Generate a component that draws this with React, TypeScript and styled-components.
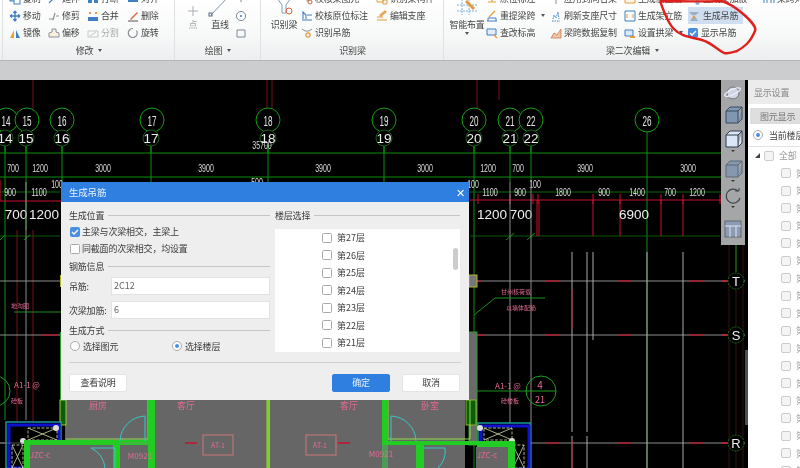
import React from 'react';
import styled, { createGlobalStyle } from 'styled-components';

const Global = createGlobalStyle`
  html, body { margin: 0; padding: 0; background: #000; overflow: hidden; }
  * { box-sizing: border-box; }
`;

const Page = styled.div`
  position: relative; width: 800px; height: 468px; overflow: hidden;
  font-family: "Noto Sans CJK SC", "Noto Sans", sans-serif; font-size: 9px; letter-spacing: -0.2px; color: #333;
  filter: blur(0.35px);
`;
const Ribbon = styled.div`
  display: flex; height: 61px; overflow: hidden; padding-left: 2px;
  background: linear-gradient(#fff, #f7f8f8 60%, #eceeef);
  border-bottom: 1px solid #b4b6b7;
`;
const Group = styled.div<{ $w: number }>`
  flex: none; width: ${p => p.$w}px; display: flex; flex-direction: column;
  border-left: 1px solid #dfe1e2; padding-left: 1px;
`;
const GroupBody = styled.div<{ $pl: number }>`
  height: 42px; display: flex; padding-left: ${p => p.$pl}px;
`;
const GroupLabel = styled.div`
  height: 17px; display: flex; align-items: center; justify-content: center; gap: 5px; color: #444;
`;
const Caret = styled.span`
  display: inline-block; width: 0; height: 0; border-left: 2.5px solid transparent; border-right: 2.5px solid transparent; border-top: 3px solid #555;
`;
const RowCaret = styled(Caret)`
  margin-left: 4px;
`;
const Col = styled.div<{ $w: number }>`
  flex: none; width: ${p => p.$w}px; margin-top: -10px; display: flex; flex-direction: column;
`;
const ToolRow = styled.div<{ $muted?: boolean; $active?: boolean; $gap?: number }>`
  height: 17px; display: flex; align-items: center; gap: ${p => p.$gap ?? 2}px; white-space: nowrap;
  color: ${p => (p.$muted ? '#aaa' : '#444')};
  background: ${p => (p.$active ? 'linear-gradient(90deg,#cfdef0 0 55px,transparent 55px)' : 'none')};
  & > svg { flex: none; }
`;
const BigTool = styled.div<{ $w: number; $muted?: boolean }>`
  flex: none; width: ${p => p.$w}px; margin-top: -10px; display: flex; flex-direction: column; align-items: center;
  color: ${p => (p.$muted ? '#aaa' : '#444')}; white-space: nowrap;
`;
const BigIconBox = styled.div`
  height: 27px; display: flex; align-items: flex-end; justify-content: center;
`;
const BigLabel = styled.div`
  height: 15px; line-height: 15px;
`;
const Band = styled.div`
  height: 19px; background: #cbcdcf;
`;
const Main = styled.div`
  display: flex; height: 388px; background: #000;
`;
const Canvas = styled.div`
  position: relative; flex: none; width: 745px; height: 388px; overflow: hidden; background: #000;
`;
const Drawing = styled.svg`
  display: block; width: 745px; height: 388px;
`;
const Scribble = styled.svg`
  position: absolute; left: 640px; top: 0; width: 130px; height: 62px; pointer-events: none;
`;
const Splitter = styled.div`
  position: relative; flex: none; width: 3px; background: #000;
  &::after { content: ""; position: absolute; left: 0; top: 270px; width: 3px; height: 75px; background: #4d4f55; }
`;
const Panel = styled.div`
  flex: 1; min-width: 0; background: #fff; overflow: hidden; white-space: nowrap; display: flex; flex-direction: column; color: #666;
`;
const PanelTitle = styled.div`
  height: 24px; flex: none; display: flex; align-items: center; padding-left: 6px; background: #ececec; color: #888;
`;
const PanelTab = styled.div`
  flex: none; height: 16px; margin: 4px 0 0 2px; display: flex; align-items: center; padding-left: 10px; background: #dedede; color: #777;
`;
const ScopeRow = styled.div`
  flex: none; height: 23px; display: flex; align-items: center; gap: 6px; padding-left: 5px; border-bottom: 1px solid #e2e2e2; color: #444;
`;
const TreeRow = styled.div<{ $child?: boolean }>`
  flex: none; height: 17.5px; display: flex; align-items: center; gap: 5px; padding-left: ${p => (p.$child ? 33 : 7)}px; color: #999;
`;
const Twist = styled.span`
  width: 0; height: 0; border-bottom: 5px solid #444; border-left: 5px solid transparent; margin-right: -1px;
`;
const TreeBox = styled.span`
  width: 10px; height: 10px; flex: none; border: 1px solid #ccc; border-radius: 2px; background: #f4f4f4;
`;
const Bar = styled.div`
  position: absolute; left: 721px; top: 0; width: 24px; height: 165px; background: #a5a6a7; display: flex; flex-direction: column; align-items: center; padding-top: 4px;
`;
const BarCaret = styled.span`
  width: 0; height: 0; margin: 1px 0 2px; border-left: 2px solid transparent; border-right: 2px solid transparent; border-top: 2px solid #333;
`;

const Dialog = styled.div`
  position: absolute; left: 61px; top: 102px; width: 408px; height: 218px; background: #eeeeee; display: flex; flex-direction: column; color: #3a3a3a;
`;
const DialogHead = styled.div`
  flex: none; height: 20px; background: #2e7fe0; color: #e8f1fc; display: flex; align-items: center; justify-content: space-between; padding: 0 4px 0 8px; font-size: 9.5px;
`;
const Close = styled.span`
  font-size: 11px; line-height: 1; color: #fff;
`;
const DialogBody = styled.div`
  flex: none; height: 160px; display: grid; grid-template-columns: 201px 185px; column-gap: 5px; padding: 6px 0 0 8px;
`;
const Pane = styled.div`
  display: flex; flex-direction: column;
`;
const Legend = styled.div<{ $mt?: number }>`
  flex: none; height: 14px; margin-top: ${p => p.$mt ?? 0}px; display: flex; align-items: center; gap: 4px; white-space: nowrap;
  &::after { content: ""; flex: 1; height: 1px; background: #c6c6c6; }
`;
const Check = styled.span<{ $on?: boolean }>`
  flex: none; width: 10px; height: 10px; border-radius: 1.5px; display: inline-flex; align-items: center; justify-content: center;
  border: 1px solid ${p => (p.$on ? '#4a90e2' : '#aaa')}; background: ${p => (p.$on ? '#4a90e2' : '#fff')};
`;
const Options = styled.div`
  flex: none; margin-top: 1px;
`;
const Option = styled.label`
  height: 17px; display: flex; align-items: center; gap: 2px; padding-left: 1px; white-space: nowrap;
`;
const FieldRow = styled.div<{ $mt?: number }>`
  flex: none; height: 18px; margin-top: ${p => p.$mt ?? 0}px; display: flex; align-items: center; white-space: nowrap;
`;
const FieldName = styled.span`
  flex: none; width: 42px;
`;
const Input = styled.div`
  flex: 1; height: 18px; background: #fff; border: 1px solid #e2e2e2; padding-left: 2px; line-height: 16px; color: #666; letter-spacing: 0;
`;
const RadioRow = styled.div`
  flex: none; height: 18px; display: grid; grid-template-columns: 102px 1fr; align-items: center;
`;
const RadioItem = styled.span`
  display: flex; align-items: center; gap: 3px; padding-left: 1px;
`;
const Radio = styled.span<{ $on?: boolean }>`
  flex: none; width: 10px; height: 10px; border-radius: 50%; border: 1px solid #aaa; background: #fff; display: inline-flex; align-items: center; justify-content: center;
  &::after { content: ""; width: 4px; height: 4px; border-radius: 50%; background: ${p => (p.$on ? '#4a90e2' : 'transparent')}; }
`;
const FloorList = styled.div`
  position: relative; flex: none; height: 123px; margin-top: 7px; background: #fff; padding: 0 0 0 47px; overflow: hidden;
`;
const FloorItem = styled.div`
  height: 17.5px; display: flex; align-items: center; gap: 5px; letter-spacing: 0; white-space: nowrap;
`;
const ScrollThumb = styled.div`
  position: absolute; right: 2px; top: 19px; width: 5px; height: 22px; border-radius: 3px; background: #ccc;
`;
const DialogFoot = styled.div`
  flex: none; margin: 0 8px 0 8px; height: 38px; border-top: 1px solid #cfcfcf; display: flex; align-items: center; padding-top: 2px;
`;
const Btn = styled.div<{ $primary?: boolean; $ml?: number }>`
  width: 58px; height: 18px; display: flex; align-items: center; justify-content: center; border-radius: 2px; margin-left: ${p => p.$ml ?? 0}px;
  background: ${p => (p.$primary ? '#2e7fe0' : '#fff')}; color: ${p => (p.$primary ? '#e8f1fc' : '#3a3a3a')}; border: 1px solid ${p => (p.$primary ? '#2e7fe0' : '#e4e4e4')};
`;

const Lbl = styled.text<{ $c?: string; $s?: number }>`
  font-family: "Liberation Sans", sans-serif; letter-spacing: 0; fill: ${p => p.$c ?? '#ddd'}; font-size: ${p => p.$s ?? 10}px; text-anchor: middle;
`;
const Pink = styled.text<{ $s?: number }>`
  font-family: "Noto Sans CJK SC", sans-serif; letter-spacing: 0; fill: #e26a94; font-size: ${p => p.$s ?? 6}px; text-anchor: middle;
`;

const S = ({ children, w = 12 }: { children: React.ReactNode; w?: number }) => (
  <svg width={w} height={12} viewBox="0 0 12 12" fill="none">{children}</svg>
);
const B = '#3f7fc6', O = '#e79a3b', G = '#8a8f96', R = '#d8643c', LB = '#a9cdf0';
const icons: Record<string, React.ReactNode> = {
  copy: <><rect x="1" y="1" width="6" height="7" fill={LB} stroke={B} /><rect x="5" y="4" width="6" height="7" fill="#fff" stroke={B} /></>,
  move: <path d="M6 1v10M1 6h10M6 1 4.5 3M6 1l1.5 2M6 11 4.5 9M6 11l1.5-2M1 6l2-1.5M1 6l2 1.5M11 6 9 4.5M11 6 9 7.5" stroke={B} strokeWidth="1.3" />,
  mirror: <><path d="M1 11 5 3v8z" fill="#e8a23a" /><path d="M7 3l4 8H7z" fill={B} /></>,
  extend: <path d="M1 10 6 5M6 5l5-4M9 1h2v2" stroke={B} strokeWidth="1.2" />,
  trim: <path d="M1 9h4M7 3 5 10M8 6h3" stroke={G} strokeWidth="1.2" />,
  offset: <path d="M1 10V6l3-1V2h4v3l3 1v4z" fill="#f8efdc" stroke={G} />,
  brk: <path d="M1 2h4v8H1zM7 2h4v8H7z" fill={B} />,
  merge: <><path d="M1 7h10v4H1z" fill={B} /><path d="M2 2h2v2H2zM8 2h2v2H8z" fill={O} /></>,
  split: <path d="M1 10V4h10v6zM3 9l6-4" stroke="#c5c7c9" />,
  align: <path d="M1 1h10v8H1z" fill={B} />,
  del: <><path d="M3 9 10 2l1 1-7 7z" fill={R} /><path d="M1 11h10" stroke="#555" /></>,
  rotate: <path d="M9.5 3.5A4.5 4.5 0 1 1 6 1.5" stroke={G} strokeWidth="1.2" />,
  pt: <path d="M6 1v10M1 6h10" stroke="#aab0b6" />,
  circle: <><circle cx="6" cy="6" r="4.6" stroke="#7d8b98" /><circle cx="6" cy="6" r="1" fill={B} /></>,
  rect: <path d="M2 3h8v7H2z" stroke="#7d8b98" />,
  arcdot: <path d="M6 1v8" stroke="#7d8b98" />,
  check1: <><path d="M3 1h7l-2 4v3H6V5z" fill="#eef3f8" stroke={G} /><circle cx="9" cy="9" r="2" stroke={R} /></>,
  mark: <path d="M1 10h10M2 9V2l3 3v4M6 5h5" stroke={B} strokeWidth="1.1" />,
  hang: <><path d="M1 2l3 2h4l3-2" stroke={G} /><circle cx="7" cy="8" r="2.2" stroke={O} strokeWidth="1.2" /></>,
  member: <path d="M1 1h6v8H1zM7 7h4v4H7z" stroke={O} />,
  edit: <path d="M1 10h10M1 7h6M4 5l5-4 1 1-5 4z" stroke={O} strokeWidth="1.1" />,
  orig: <path d="M2 9h8M6 1v8" stroke={O} strokeWidth="1.2" />,
  reget: <><path d="M1 11h10M2 11V8h8v3" stroke={B} /><path d="M3 7 9 1" stroke={O} strokeWidth="1.3" /></>,
  change: <><path d="M1 2h9v6H1z" fill="#e4eefa" stroke={B} /><path d="M8 8l3 3" stroke={O} strokeWidth="1.3" /></>,
  apply: <><circle cx="6" cy="4" r="3" fill={O} /><path d="M6 7v4" stroke={G} /></>,
  refresh: <path d="M2 11h8M3 9l1-4 2 3 2-6 1 7" stroke={B} strokeDasharray="1.5 1" />,
  spancopy: <path d="M1 11l3-5 3 2 4-6v9z" fill="#e9c9a8" stroke={R} strokeWidth=".7" />,
  side: <path d="M1 2h10v8H1z" fill="#fdf5e6" stroke={O} />,
  stand: <><path d="M1 1h10v10H1z" stroke={B} /><path d="M3 4v4M9 4v4" stroke={O} /></>,
  arch: <><path d="M1 3h8v6H1z" fill="#dceafa" stroke={B} /><path d="M6 9h5v2H6z" fill={O} /></>,
  hanger: <><path d="M1 2h10L8 5H4zM2 11h8L8 8H4z" fill="#9ab0c6" /><path d="M4 8h4l-2-3z" fill={O} /></>,
  haunch: <path d="M1 1h7v4H1zM8 8h3v3H8z" fill={LB} stroke={B} strokeWidth=".7" />,
  span: <path d="M1 10V4h10v6M4 4v6M8 4v6" stroke={B} />,
};

type T = { i: string; t?: string; m?: boolean; a?: boolean; act?: boolean; g?: number; chk?: boolean };
const Tick = () => (
  <svg width="8" height="8" viewBox="0 0 8 8" fill="none"><path d="M1 4l2 2 4-4" stroke="#fff" strokeWidth="1.3" /></svg>
);
const Tool = ({ i, t, m, a, act, g, chk }: T) => (
  <ToolRow $muted={m} $active={act} $gap={g}>
    {chk ? <Check $on><Tick /></Check> : <S>{icons[i]}</S>}
    {t && <span>{t}</span>}
    {a && <RowCaret />}
  </ToolRow>
);
const ToolCol = ({ w, items }: { w: number; items: T[] }) => (
  <Col $w={w}>{items.map((x, n) => <Tool key={n} {...x} />)}</Col>
);
const Big = ({ w, label, muted, children, caret }: { w: number; label: string; muted?: boolean; children: React.ReactNode; caret?: boolean }) => (
  <BigTool $w={w} $muted={muted}>
    <BigIconBox>{children}</BigIconBox>
    <BigLabel>{label}</BigLabel>
    {caret && <Caret />}
  </BigTool>
);

const top = [[14, 6], [15, 27], [16, 62], [17, 152], [18, 268], [19, 384], [20, 474], [21, 510], [22, 531], [26, 647]];
const second = [[14, 5], [15, 26], [16, 62], [17, 151], [18, 268], [19, 384], [20, 474], [21, 510], [22, 531]];
const dims1: [string, number][] = [['700', 13], ['1200', 40], ['3000', 103], ['3900', 206], ['3900', 323], ['3000', 425], ['1200', 488], ['700', 518], ['3900', 585], ['3000', 688]];
const dims2: [string, number][] = [['900', 10], ['1100', 39], ['1100', 490], ['900', 520], ['1800', 563], ['900', 604], ['1400', 637], ['700', 670], ['1200', 697]];
const redTicks = [478, 510, 533, 538, 593, 620, 661, 683, 720];

const Dim = ({ x, y, t, c }: { x: number; y: number; t: string; c?: string }) => (
  <Lbl x={x} y={y} $c={c} textLength={t.length * 3.9} lengthAdjust="spacingAndGlyphs">{t}</Lbl>
);

const Hatch = ({ x, y, w, h }: { x: number; y: number; w: number; h: number }) => (
  <g stroke="#cfe0a8" strokeWidth=".8" fill="none" strokeDasharray="3 1.5">
    <rect x={x} y={y} width={w} height={h} />
    <path d={`M${x} ${y}L${x + w} ${y + h}M${x} ${y + h}L${x + w} ${y}`} strokeDasharray="none" />
  </g>
);

const CadDrawing = () => (
  <Drawing viewBox="0 80 745 388">
    <g stroke="#7a0f1c" strokeWidth="1" fill="none">
      <path d="M33 80V110M267 80V110M272 80V110M477 80V110M499 80V100" />
      <path d="M17 230V430M33 230V430M150 195V200" />
    </g>
    <g stroke="#0c8f0c" fill="none">
      <path d="M0 153H721M0 177H721" />
      <path d="M5 146V230M26 146V230M62 146V182M151 146V182M268 146V182M384 146V182M474 146V182M510 146V182M531 146V182M647 132V182" />
      <path d="M474 182V468M647 182V468M5 230V420" stroke="#158a15" />
    </g>
    <path d="M0 192H60M470 192H721" stroke="#0a6a0a" fill="none" />
    <path d="M470 236H720M0 236H60" stroke="#0a5a0a" fill="none" />
    <path d="M0 201H62M470 200H721" stroke="#c8102e" fill="none" />
    <path d="M0 201V180M537 200V236M539 200V236M593 200V236M620 200V236M661 200V236M683 200V236" stroke="#c8102e" fill="none" />
    {redTicks.map(x => <path key={x} d={`M${x} 194V204`} stroke="#c8102e" />)}
    {top.map(([n, x]) => (
      <g key={n}>
        <circle cx={x} cy={120} r={12} fill="#000" stroke="#12a012" strokeWidth="1" />
        <Lbl x={x} y={126} textLength={9} lengthAdjust="spacingAndGlyphs" $s={15} $c="#e6e6e6">{n}</Lbl>
      </g>
    ))}
    {second.map(([n, x]) => (
      <g key={n}>
        <circle cx={x} cy={138} r={8} fill="#000" stroke="#1c5c1c" />
        <Lbl x={x} y={143} $s={13.5} $c="#eee">{n}</Lbl>
      </g>
    ))}
    <path d="M5 146V153M26 146V153M62 146V153M151 146V153M268 146V153M384 146V153M474 146V153M510 146V153M531 146V153" stroke="#0c8f0c" />
    <Dim x={262} y={149} t="35700" />
    {dims1.map(([t, x]) => <Dim key={x} x={x} y={172} t={t} />)}
    {dims2.map(([t, x]) => <Dim key={x} x={x} y={196} t={t} />)}
    <Dim x={57} y={188} t="100" />
    <Dim x={473} y={188} t="100" />
    <Dim x={535} y={188} t="100" />
    <Dim x={257} y={186} t="500" />
    {[[16, '700'], [44, '1200'], [492, '1200'], [521, '700'], [634, '6900']].map(([x, t]) => (
      <Lbl key={String(x)} x={Number(x)} y={219} $s={13.5} $c="#f0f0f0">{t}</Lbl>
    ))}
    <path d="M0 240 5 235M24 240 30 235M506 240 514 233M527 240 535 233" stroke="#0c8f0c" fill="none" />
    <g stroke="#8c8c8c" fill="none">
      <path d="M26 182V420M510 182V468M531 182V468" />
      <path d="M0 281H745M0 335H745M0 443H745" />
      <path d="M572 252V432M587 252V432M593 252V340M647 252V468M683 252V468M572 436V468M587 436V468" stroke="#aaa" />
    </g>
    <g stroke="#a81c2c" strokeWidth="1.4" fill="none">
      <path d="M545 281h15M618 281h14M690 281h14M545 335h15M618 335h14M690 335h14M545 443h15M618 443h14M690 443h14M42 335h16M475 335h10M475 281h6" />
      <path d="M572 290V330M572 440V468" strokeWidth="1" />
    </g>
    <path d="M722 281h5M722 335h5M722 443h5" stroke="#cc2233" strokeWidth="1.4" />
    <path d="M729 245V468M743 245V468M736 245V468" stroke="#3a1010" />
    <path d="M736 245V272" stroke="#148a14" />
    {[['T', 281], ['S', 335], ['R', 443]].map(([t, y]) => (
      <g key={String(t)}>
        <circle cx={736} cy={Number(y)} r={8} fill="#000" stroke="#1c6e1c" strokeDasharray="2 1" />
        <Lbl x={736} y={Number(y) + 5} $s={13} $c="#eee">{t}</Lbl>
      </g>
    ))}
    <path d="M474 315 495 298H545" stroke="#1f8f1f" fill="none" />
    <path d="M14 312H62" stroke="#1f8f1f" fill="none" />
    <path d="M470 391H526" stroke="#1f8f1f" fill="none" />
    <Pink x={516} y={294}>甘州核荷载</Pink>
    <Pink x={521} y={310}>以墙体配筋</Pink>
    <Pink x={20} y={308}>地沟图</Pink>
    <Pink x={508} y={389} $s={8}>A1-1 @</Pink>
    <Pink x={510} y={403}>砼楼板</Pink>
    <Pink x={27} y={388} $s={8}>A1-1 @</Pink>
    <Pink x={17} y={403}>砼板</Pink>
    <circle cx={541} cy={391} r={15} fill="none" stroke="#1f9f1f" />
    <path d="M526 391H556" stroke="#1f9f1f" />
    <Pink x={540} y={389} $s={10}>4</Pink>
    <Pink x={540} y={403} $s={9}>21</Pink>
    <circle cx={-5} cy={391} r={15} fill="none" stroke="#1f9f1f" />
    <rect x={469} y={275} width={8} height={12} fill="#777" stroke="#b5b52a" />
    <rect x={469} y={332} width={8} height={113} fill="#6a6a6a" stroke="#2f9a2f" />
    <rect x={60} y={275} width={2} height={12} fill="#b5b52a" />
    <rect x={60} y={332} width={2} height={70} fill="#2f9a2f" />
    <rect x={65} y={400} width={400} height={68} fill="#666" />
    <rect x={60} y={400} width={6} height={25} fill="#0b5c0b" stroke="#9ccc3a" />
    <rect x={466} y={400} width={10} height={25} fill="#0b5c0b" stroke="#8fb52a" />
    <path d="M66 439H148V400M267 400V468M388 400V439H470V400" stroke="#8fe04a" fill="none" />
    <rect x={6} y={422} width={55} height={46} fill="#000" stroke="#1aa0a0" strokeWidth="1.4" />
    <rect x={9} y={425} width={50} height={43} fill="#000" stroke="#1010d0" strokeWidth="3" />
    <Hatch x={28} y={428} w={29} h={12} />
    <Hatch x={12} y={445} w={11} h={23} />
    <rect x={30} y={445} width={40} height={23} fill="#666" />
    <circle cx={56} cy={428} r={3} fill="#ddd" />
    <circle cx={23} cy={441} r={3} fill="#ddd" />
    <rect x={478} y={423} width={52} height={46} fill="#000" stroke="#1aa0a0" strokeWidth="1.4" />
    <rect x={481} y={426} width={48} height={43} fill="#000" stroke="#1010d0" strokeWidth="3" />
    <Hatch x={484} y={428} w={28} h={12} />
    <Hatch x={513} y={445} w={11} h={23} />
    <rect x={476} y={447} width={33} height={21} fill="#666" />
    <circle cx={480} cy={428} r={3} fill="#ddd" />
    <circle cx={512} cy={441} r={3} fill="#ddd" />
    <g fill="#22cc22">
      <rect x={24} y={440} width={131} height={5} />
      <rect x={24} y={445} width={6} height={23} />
      <rect x={148} y={400} width={7} height={68} />
      <rect x={113} y={445} width={7} height={23} />
      <rect x={382} y={400} width={6} height={45} />
      <rect x={382} y={445} width={6} height={23} fill="#4f9a55" />
      <rect x={388} y={441} width={92} height={4} />
      <rect x={416} y={445} width={8} height={23} />
      <rect x={477} y={441} width={38} height={6} />
      <rect x={508} y={447} width={7} height={21} />
    </g>
    <rect x={267} y={400} width={3} height={68} fill="#7ed321" />
    <g stroke="#38c8c8" strokeWidth="1" fill="none">
      <path d="M145 416V441M145 416A26 26 0 0 0 120 441" />
      <path d="M91 448H115V468M91 448A24 24 0 0 1 105 468" />
      <path d="M391 416V441M391 416A26 26 0 0 1 416 441" />
      <path d="M445 448H424M445 448A24 24 0 0 1 438 468" />
    </g>
    <rect x={203} y={435} width={30} height={20} fill="none" stroke="#c77" />
    <rect x={306} y={435} width={30} height={20} fill="none" stroke="#c77" />
    <path d="M185 443H197M338 443H350" stroke="#c8102e" strokeWidth="1.4" />
    <path d="M0 443H24M120 443H148" stroke="#888" opacity=".6" />
    <Pink x={218} y={448} $s={7}>AT-1</Pink>
    <Pink x={320} y={448} $s={7}>AT-1</Pink>
    <Pink x={98} y={409} $s={9}>厨房</Pink>
    <Pink x={186} y={409} $s={9}>客厅</Pink>
    <Pink x={349} y={409} $s={9}>客厅</Pink>
    <Pink x={430} y={409} $s={9}>卧室</Pink>
    <Pink x={140} y={459} $s={8}>M0921</Pink>
    <Pink x={381} y={457} $s={8}>M0921</Pink>
    <Pink x={40} y={458} $s={8}>JZC-c</Pink>
    <Pink x={487} y={458} $s={8}>JZC-c</Pink>
  </Drawing>
);

const FloatIcons = () => (
  <>
    <svg width="18" height="18" viewBox="0 0 18 18" fill="none"><circle cx="9" cy="9" r="6" fill="#cfd6e2" stroke="#6f7480" /><ellipse cx="9" cy="8" rx="8.5" ry="2.6" transform="rotate(-25 9 9)" stroke="#eef" strokeWidth="1.2" /></svg>
    <svg width="19" height="20" viewBox="0 0 19 20" style={{ marginTop: 3 }} fill="none"><path d="M2 6h12v12H2zM2 6l4-4h12l-4 4M14 18l4-4V2" fill="#7f97b2" stroke="#3b4a5c" /></svg>
    <svg width="19" height="20" viewBox="0 0 19 20" style={{ marginTop: 4 }} fill="none"><path d="M2 6h12v12H2zM2 6l4-4h12l-4 4M14 18l4-4V2" fill="#dbe7f6" stroke="#2d3c4e" /></svg>
    <BarCaret />
    <svg width="19" height="20" viewBox="0 0 19 20" style={{ marginTop: 5 }} fill="none"><path d="M2 6h12v12H2zM2 6l4-4h12l-4 4M14 18l4-4V2" fill="#8498b0" stroke="#5d6875" /></svg>
    <BarCaret />
    <svg width="19" height="18" viewBox="0 0 19 18" style={{ marginTop: 3 }} fill="none"><path d="M14 4A7 7 0 1 0 16 11" stroke="#404449" strokeWidth="1.2" /><path d="M11 4h4V1" stroke="#404449" /></svg>
    <BarCaret />
    <svg width="18" height="18" viewBox="0 0 18 18" style={{ marginTop: 10 }} fill="none"><rect x="1" y="1" width="16" height="16" fill="#8c9cb4" stroke="#5d6875" /><path d="M1 6h16M6 6v11M12 6v11" stroke="#dfe7f2" /></svg>
  </>
);

const floors = ['第27层', '第26层', '第25层', '第24层', '第23层', '第22层', '第21层'];

export default function App() {
  return (
    <Page>
      <Global />
      <Ribbon>
        <Group $w={172}>
          <GroupBody $pl={5}>
            <ToolCol w={39} items={[{ i: 'copy', t: '复制' }, { i: 'move', t: '移动' }, { i: 'mirror', t: '镜像' }]} />
            <ToolCol w={39} items={[{ i: 'extend', t: '延伸' }, { i: 'trim', t: '修剪' }, { i: 'offset', t: '偏移' }]} />
            <ToolCol w={40} items={[{ i: 'brk', t: '打断' }, { i: 'merge', t: '合并' }, { i: 'split', t: '分割', m: true }]} />
            <ToolCol w={45} items={[{ i: 'align', t: '对齐' }, { i: 'del', t: '删除' }, { i: 'rotate', t: '旋转' }]} />
          </GroupBody>
          <GroupLabel>修改<Caret /></GroupLabel>
        </Group>
        <Group $w={86}>
          <GroupBody $pl={5}>
            <Big w={24} label="点" muted><S w={22}>{icons.pt}</S></Big>
            <Big w={30} label="直线"><svg width="24" height="24" viewBox="0 0 24 24" fill="none"><path d="M3 22 22 2" stroke="#7d95ad" /><rect x="1" y="20" width="3" height="3" stroke="#567" /></svg></Big>
            <ToolCol w={14} items={[{ i: 'arcdot' }, { i: 'circle' }, { i: 'rect' }]} />
          </GroupBody>
          <GroupLabel>绘图<Caret /></GroupLabel>
        </Group>
        <Group $w={183}>
          <GroupBody $pl={5}>
            <Big w={34} label="识别梁"><svg width="22" height="24" viewBox="0 0 22 24" fill="none"><path d="M2 2 9 12v8h4v-8l7-10" stroke="#7ea0bf" /><path d="M5 0h12v3H5z" fill="#dde6ef" /><circle cx="16" cy="18" r="3" stroke={R} /></svg></Big>
            <ToolCol w={75} items={[{ i: 'check1', t: '校核梁图元' }, { i: 'mark', t: '校核原位标注' }, { i: 'hang', t: '识别吊筋' }]} />
            <ToolCol w={60} items={[{ i: 'member', t: '识别梁构件' }, { i: 'edit', t: '编辑支座' }]} />
          </GroupBody>
          <GroupLabel>识别梁</GroupLabel>
        </Group>
        <Group $w={377}>
          <GroupBody $pl={3}>
            <Big w={38} label="智能布置" caret><svg width="24" height="26" viewBox="0 0 24 26" fill="none"><path d="M2 8h20M2 14h20M2 20h20M7 2v22M14 2v22" stroke="#7eb0dd" strokeDasharray="2 1" /><path d="M11 10l8 8" stroke={O} strokeWidth="3" /></svg></Big>
            <ToolCol w={64} items={[{ i: 'orig', t: '原位标注', a: true }, { i: 'reget', t: '重提梁跨', a: true }, { i: 'change', t: '查改标高' }]} />
            <ToolCol w={74} items={[{ i: 'apply', t: '应用到同名梁' }, { i: 'refresh', t: '刷新支座尺寸' }, { i: 'spancopy', t: '梁跨数据复制' }]} />
            <ToolCol w={64} items={[{ i: 'side', t: '生成侧面筋' }, { i: 'stand', t: '生成架立筋' }, { i: 'arch', t: '设置拱梁', a: true }]} />
            <ToolCol w={75} items={[{ i: 'haunch', t: '生成梁加腋', g: 3 }, { i: 'hanger', t: '生成吊筋', act: true, g: 3 }, { i: '', t: '显示吊筋', chk: true, g: 3 }]} />
            <ToolCol w={50} items={[{ i: 'span', t: '梁跨对称' }]} />
          </GroupBody>
          <GroupLabel>梁二次编辑<Caret /></GroupLabel>
        </Group>
      </Ribbon>
      <Band />
      <Main>
        <Canvas>
          <CadDrawing />
          <Bar><FloatIcons /></Bar>
          <Dialog>
            <DialogHead>生成吊筋<Close>✕</Close></DialogHead>
            <DialogBody>
              <Pane>
                <Legend>生成位置</Legend>
                <Options>
                  <Option><Check $on><Tick /></Check>主梁与次梁相交，主梁上</Option>
                  <Option><Check />同截面的次梁相交，均设置</Option>
                </Options>
                <Legend $mt={2}>钢筋信息</Legend>
                <FieldRow $mt={4}><FieldName>吊筋:</FieldName><Input>2C12</Input></FieldRow>
                <FieldRow $mt={6}><FieldName>次梁加筋:</FieldName><Input>6</Input></FieldRow>
                <Legend $mt={4}>生成方式</Legend>
                <RadioRow>
                  <RadioItem><Radio />选择图元</RadioItem>
                  <RadioItem><Radio $on />选择楼层</RadioItem>
                </RadioRow>
              </Pane>
              <Pane>
                <Legend>楼层选择</Legend>
                <FloorList>
                  {floors.map(f => <FloorItem key={f}><Check />{f}</FloorItem>)}
                  <ScrollThumb />
                </FloorList>
              </Pane>
            </DialogBody>
            <DialogFoot>
              <Btn>查看说明</Btn>
              <Btn $primary $ml={205}>确定</Btn>
              <Btn $ml={12}>取消</Btn>
            </DialogFoot>
          </Dialog>
        </Canvas>
        <Splitter />
        <Panel>
          <PanelTitle>显示设置</PanelTitle>
          <PanelTab>图元显示</PanelTab>
          <ScopeRow><Radio $on />当前楼层</ScopeRow>
          <TreeRow><Twist /><TreeBox />全部</TreeRow>
          {Array.from({ length: 18 }, (_, n) => <TreeRow $child key={n}><TreeBox />第</TreeRow>)}
        </Panel>
      </Main>
      <Scribble viewBox="640 0 130 62">
        <path d="M660 1C664 12 668 24 674 29C680 36 690 37 702 40C712 43 716 49 724 53C730 54 734 52 737 51C744 47 750 43 755 31C757 27 748 18 742 13C735 7 728 3 722 1C700 2 680 1 660 1" fill="none" stroke="#e0201c" strokeWidth="2.4" />
      </Scribble>
    </Page>
  );
}
